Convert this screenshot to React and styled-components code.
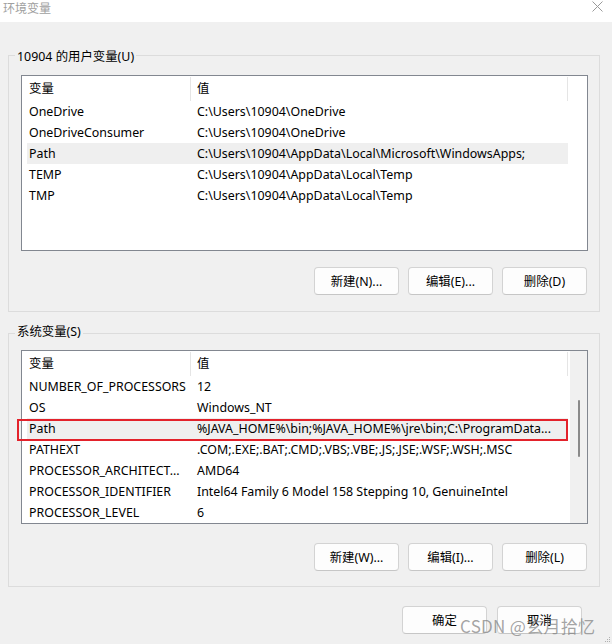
import React from 'react';
import styled, { createGlobalStyle } from 'styled-components';

const Global = createGlobalStyle`
  html, body { margin: 0; padding: 0; background: #f0f0f0; }
  body {
    font-family: "Noto Sans", "Noto Sans CJK SC", sans-serif;
    font-size: 12.4px;
    color: #000;
  }
`;

const Window = styled.div`
  position: relative;
  width: 612px;
  height: 644px;
  overflow: hidden;
  background: #f0f0f0;
  display: flex;
  flex-direction: column;
`;

const TitleBar = styled.div`
  height: 22px;
  flex: none;
  background: #fff;
  display: flex;
  justify-content: space-between;
  align-items: flex-start;
`;

const Title = styled.div`
  padding: 1px 0 0 3px;
  font-family: "Noto Sans CJK SC", sans-serif;
  font-size: 12px;
  line-height: 14px;
  color: #a0a0a0;
`;

const CloseIcon = styled.svg`
  margin: 1px 9px 0 0;
`;

const Body = styled.div`
  padding: 24px 12px 0 8px;
  display: flex;
  flex-direction: column;
`;

const Group = styled.fieldset`
  margin: ${p => p.$mt}px 0 0 0;
  min-width: 0;
  border: 1px solid #dcdcdc;
  padding: ${p => p.$pt}px 11px ${p => p.$pb}px 12px;
  display: flex;
  flex-direction: column;
`;

const Legend = styled.legend`
  padding: ${p => p.$top}px 2px ${p => p.$bottom}px 2px;
  margin-left: -6px;
  line-height: 16px;
  font-family: "Noto Sans", "Noto Sans CJK SC", sans-serif;
  font-size: 12.4px;
`;

const List = styled.div`
  height: ${p => p.$h}px;
  box-sizing: border-box;
  border: 1px solid #828790;
  background: #fff;
  display: flex;
`;

const Table = styled.div`
  flex: 1;
  display: flex;
  flex-direction: column;
  padding-left: 5px;
`;

const HeaderRow = styled.div`
  height: 25px;
  display: grid;
  grid-template-columns: 164px 377px;
`;

const HeaderCell = styled.div`
  border-right: 1px solid #e5e5e5;
  margin-top: 1px;
  padding-left: ${p => p.$pl}px;
  line-height: 23px;
  font-family: "Noto Sans CJK SC", sans-serif;
  font-size: 12.4px;
`;

const Row = styled.div`
  position: relative;
  width: 541px;
  height: 21px;
  display: grid;
  grid-template-columns: 164px 377px;
  background: ${p => (p.$selected ? '#efefef' : 'transparent')};
  ${p =>
    p.$marked &&
    `
    &::after {
      content: "";
      position: absolute;
      left: -10px;
      right: 0;
      top: 1px;
      bottom: -2px;
      border: 2px solid #e3222b;
    }
  `}
`;

const Cell = styled.div`
  padding-left: ${p => p.$pl}px;
  line-height: 21px;
  white-space: nowrap;
  overflow: hidden;
`;

const Scrollbar = styled.div`
  width: 17px;
  margin-left: 1px;
  background: #f0f0f0;
  display: flex;
  justify-content: center;
  padding-top: 49px;
  box-sizing: border-box;
`;

const Thumb = styled.div`
  width: 2px;
  height: 57px;
  border-radius: 1px;
  background: #8a8a8a;
`;

const ButtonRow = styled.div`
  margin-top: ${p => p.$mt}px;
  display: flex;
  justify-content: flex-end;
  gap: 9px;
  padding-right: 1px;
`;

const Button = styled.button`
  width: 85px;
  height: 28px;
  box-sizing: border-box;
  padding: 0;
  border: 1px solid #d3d3d3;
  border-bottom-color: #c6c6c6;
  border-radius: 4px;
  background: #fdfdfd;
  font-family: "Noto Sans", "Noto Sans CJK SC", sans-serif;
  font-size: 12.4px;
  color: #000;
`;

const Footer = styled.div`
  margin-top: 19px;
  padding-right: 18px;
  display: flex;
  justify-content: flex-end;
  gap: 10px;
`;

const Watermark = styled.div`
  position: absolute;
  left: 460px;
  top: 615px;
  font-family: "Noto Sans CJK SC", sans-serif;
  font-size: 17px;
  line-height: 22px;
  color: rgba(125, 125, 125, 0.7);
  pointer-events: none;
  letter-spacing: 0.3px;
`;

const Grip = styled.svg`
  position: absolute;
  right: 1px;
  bottom: 1px;
`;

const userVars = [
  ['OneDrive', 'C:\\Users\\10904\\OneDrive'],
  ['OneDriveConsumer', 'C:\\Users\\10904\\OneDrive'],
  ['Path', 'C:\\Users\\10904\\AppData\\Local\\Microsoft\\WindowsApps;', true],
  ['TEMP', 'C:\\Users\\10904\\AppData\\Local\\Temp'],
  ['TMP', 'C:\\Users\\10904\\AppData\\Local\\Temp'],
];

const sysVars = [
  ['NUMBER_OF_PROCESSORS', '12'],
  ['OS', 'Windows_NT'],
  ['Path', '%JAVA_HOME%\\bin;%JAVA_HOME%\\jre\\bin;C:\\ProgramData...', true, true],
  ['PATHEXT', '.COM;.EXE;.BAT;.CMD;.VBS;.VBE;.JS;.JSE;.WSF;.WSH;.MSC'],
  ['PROCESSOR_ARCHITECT...', 'AMD64'],
  ['PROCESSOR_IDENTIFIER', 'Intel64 Family 6 Model 158 Stepping 10, GenuineIntel'],
  ['PROCESSOR_LEVEL', '6'],
];

function VarTable({ rows }) {
  return (
    <Table>
      <HeaderRow>
        <HeaderCell $pl={2}>变量</HeaderCell>
        <HeaderCell $pl={6}>值</HeaderCell>
      </HeaderRow>
      {rows.map(([name, value, selected, marked]) => (
        <Row key={name} $selected={selected} $marked={marked}>
          <Cell $pl={2}>{name}</Cell>
          <Cell $pl={6}>{value}</Cell>
        </Row>
      ))}
    </Table>
  );
}

export default function App() {
  return (
    <Window>
      <Global />
      <TitleBar>
        <Title>环境变量</Title>
        <CloseIcon width="11" height="11" viewBox="0 0 11 11">
          <path d="M0.5 0.5 L10.5 10.5 M10.5 0.5 L0.5 10.5" stroke="#9a9a9a" strokeWidth="1" fill="none" />
        </CloseIcon>
      </TitleBar>
      <Body>
        <Group $mt={0} $pt={10} $pb={16}>
          <Legend $top={3} $bottom={0}>10904 的用户变量(U)</Legend>
          <List $h={176}>
            <VarTable rows={userVars} />
          </List>
          <ButtonRow $mt={16}>
            <Button>新建(N)...</Button>
            <Button>编辑(E)...</Button>
            <Button>删除(D)</Button>
          </ButtonRow>
        </Group>
        <Group $mt={12} $pt={7} $pb={15}>
          <Legend $top={0} $bottom={3}>系统变量(S)</Legend>
          <List $h={174}>
            <VarTable rows={sysVars} />
            <Scrollbar>
              <Thumb />
            </Scrollbar>
          </List>
          <ButtonRow $mt={19}>
            <Button>新建(W)...</Button>
            <Button>编辑(I)...</Button>
            <Button>删除(L)</Button>
          </ButtonRow>
        </Group>
        <Footer>
          <Button>确定</Button>
          <Button>取消</Button>
        </Footer>
      </Body>
      <Watermark>CSDN @玄月拾忆</Watermark>
      <Grip width="6" height="6" viewBox="0 0 6 6">
        <rect x="4" y="0" width="1" height="1" fill="#b0b0b0" />
        <rect x="2" y="2" width="1" height="1" fill="#b0b0b0" />
        <rect x="4" y="2" width="1" height="1" fill="#b0b0b0" />
        <rect x="0" y="4" width="1" height="1" fill="#b0b0b0" />
        <rect x="2" y="4" width="1" height="1" fill="#b0b0b0" />
        <rect x="4" y="4" width="1" height="1" fill="#b0b0b0" />
      </Grip>
    </Window>
  );
}
